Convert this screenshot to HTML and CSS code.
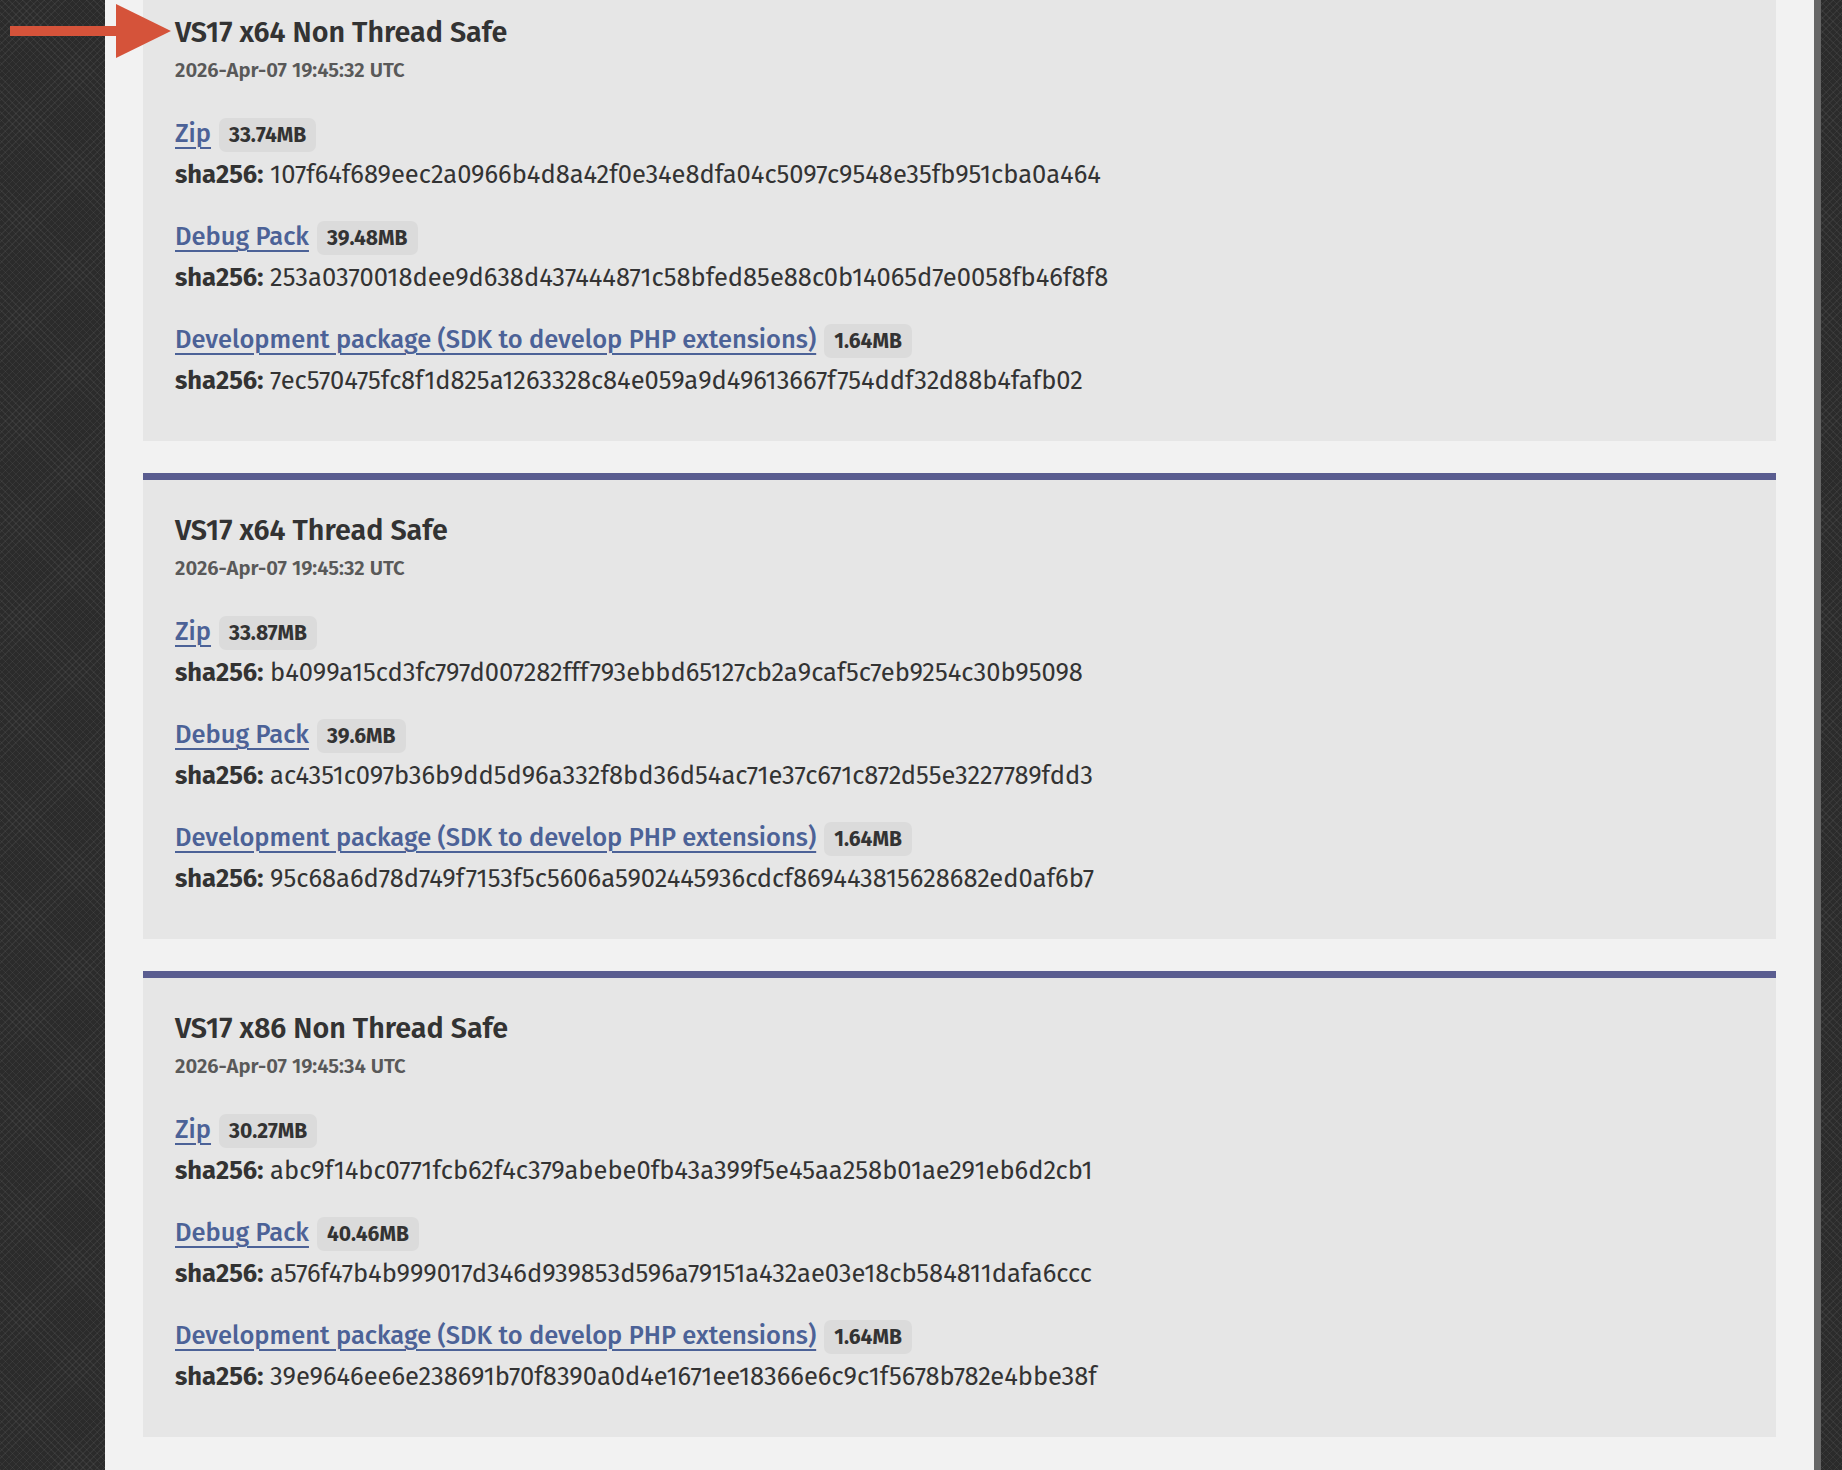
FILE: index.html
```html
<!DOCTYPE html>
<html>
<head>
  <title>PHP For Windows: Binaries and sources Releases</title>
  <link rel="stylesheet" href="styles.css">
</head>
<body>
  <svg class="pointer" width="176" height="62" viewBox="0 0 176 62">
    <rect x="10" y="26" width="108" height="10" fill="#d5533a"/>
    <polygon points="116,4 171,31 116,58" fill="#d5533a"/>
  </svg>

  <div id="page">

    <div class="build">
      <h3>VS17 x64 Non Thread Safe</h3>
      <div class="time">2026-Apr-07 19:45:32 UTC</div>
      <div class="file">
        <div class="file-link"><a href="#">Zip</a><span class="size">33.74MB</span></div>
        <div class="sha"><b>sha256:</b> 107f64f689eec2a0966b4d8a42f0e34e8dfa04c5097c9548e35fb951cba0a464</div>
      </div>
      <div class="file">
        <div class="file-link"><a href="#">Debug Pack</a><span class="size">39.48MB</span></div>
        <div class="sha"><b>sha256:</b> 253a0370018dee9d638d437444871c58bfed85e88c0b14065d7e0058fb46f8f8</div>
      </div>
      <div class="file">
        <div class="file-link"><a href="#">Development package (SDK to develop PHP extensions)</a><span class="size">1.64MB</span></div>
        <div class="sha"><b>sha256:</b> 7ec570475fc8f1d825a1263328c84e059a9d49613667f754ddf32d88b4fafb02</div>
      </div>
    </div>

    <div class="build">
      <h3>VS17 x64 Thread Safe</h3>
      <div class="time">2026-Apr-07 19:45:32 UTC</div>
      <div class="file">
        <div class="file-link"><a href="#">Zip</a><span class="size">33.87MB</span></div>
        <div class="sha"><b>sha256:</b> b4099a15cd3fc797d007282fff793ebbd65127cb2a9caf5c7eb9254c30b95098</div>
      </div>
      <div class="file">
        <div class="file-link"><a href="#">Debug Pack</a><span class="size">39.6MB</span></div>
        <div class="sha"><b>sha256:</b> ac4351c097b36b9dd5d96a332f8bd36d54ac71e37c671c872d55e3227789fdd3</div>
      </div>
      <div class="file">
        <div class="file-link"><a href="#">Development package (SDK to develop PHP extensions)</a><span class="size">1.64MB</span></div>
        <div class="sha"><b>sha256:</b> 95c68a6d78d749f7153f5c5606a5902445936cdcf869443815628682ed0af6b7</div>
      </div>
    </div>

    <div class="build">
      <h3>VS17 x86 Non Thread Safe</h3>
      <div class="time">2026-Apr-07 19:45:34 UTC</div>
      <div class="file">
        <div class="file-link"><a href="#">Zip</a><span class="size">30.27MB</span></div>
        <div class="sha"><b>sha256:</b> abc9f14bc0771fcb62f4c379abebe0fb43a399f5e45aa258b01ae291eb6d2cb1</div>
      </div>
      <div class="file">
        <div class="file-link"><a href="#">Debug Pack</a><span class="size">40.46MB</span></div>
        <div class="sha"><b>sha256:</b> a576f47b4b999017d346d939853d596a79151a432ae03e18cb584811dafa6ccc</div>
      </div>
      <div class="file">
        <div class="file-link"><a href="#">Development package (SDK to develop PHP extensions)</a><span class="size">1.64MB</span></div>
        <div class="sha"><b>sha256:</b> 39e9646ee6e238691b70f8390a0d4e1671ee18366e6c9c1f5678b782e4bbe38f</div>
      </div>
    </div>

  </div>
</body>
</html>
```

FILE: styles.css
```css
/* windows downloads list */
html, body {
  height: 100%;
}
body {
  margin: 0;
  position: relative;
  overflow: hidden;
  font-family: "Fira Sans", "Open Sans", sans-serif;
  color: #333;
  background-color: #2b2b2b;
  background-image:
    repeating-linear-gradient(45deg, rgba(255,255,255,0.05) 0 1px, transparent 1px 5px),
    repeating-linear-gradient(-45deg, rgba(255,255,255,0.05) 0 1px, transparent 1px 5px);
}
.pointer {
  position: absolute;
  top: 0;
  left: 0;
  z-index: 2;
}
#page {
  display: flex;
  flex-direction: column;
  gap: 32px;
  margin-left: 105px;
  width: 1716px;
  min-height: 100%;
  box-sizing: border-box;
  padding: 0 38px;
  background-color: #f2f2f2;
  border-right: 7px solid #666;
}
.build {
  background-color: #e6e6e6;
  border-top: 7px solid #5a5d90;
  padding: 33px 32px 47px;
}
.build:first-child {
  margin-top: -25px;
}
.build h3 {
  margin: 0;
  font-size: 28.7px;
  line-height: 36px;
  font-weight: 600;
  color: #333;
}
.time {
  margin-top: 5px;
  font-size: 20.3px;
  line-height: 28px;
  font-weight: 600;
  color: #595959;
}
.file {
  margin-top: 31px;
}
.time + .file {
  margin-top: 32px;
}
.file-link {
  display: flex;
  align-items: baseline;
  gap: 8px;
}
.file-link a {
  font-size: 25.5px;
  line-height: 36px;
  font-weight: 500;
  color: #4c6297;
  text-decoration: underline;
  text-decoration-thickness: 2px;
  text-underline-offset: 5px;
}
.size {
  font-size: 21px;
  line-height: 24px;
  font-weight: 700;
  color: #333;
  background-color: #dbdbdb;
  border-radius: 7px;
  padding: 5px 10px;
}
.sha {
  margin-top: 10px;
  font-size: 25.5px;
  line-height: 26px;
  color: #333;
}
.sha b {
  font-weight: 700;
}
```
